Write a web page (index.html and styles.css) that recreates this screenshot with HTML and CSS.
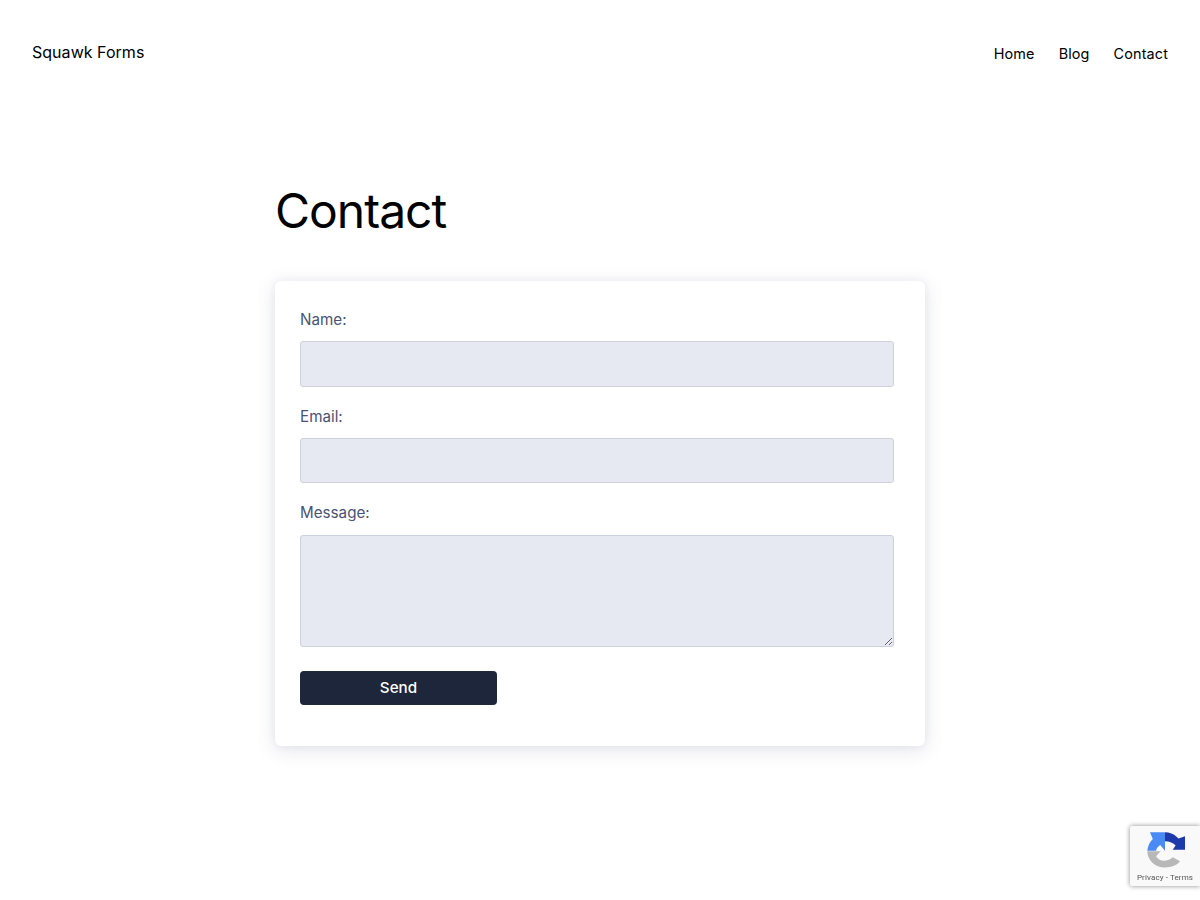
FILE: index.html
```html
<!DOCTYPE html>
<html lang="en">
<head>
<meta charset="utf-8">
<title>Contact - Squawk Forms</title>
<link rel="stylesheet" href="styles.css">
</head>
<body>
<header class="site-header">
  <a class="brand" href="#">Squawk Forms</a>
  <nav class="nav">
    <a href="#">Home</a>
    <a href="#">Blog</a>
    <a href="#">Contact</a>
  </nav>
</header>
<main class="content">
  <h1 class="title">Contact</h1>
  <form class="card">
    <label class="label" for="name">Name:</label>
    <input class="field" id="name" type="text">
    <label class="label" for="email">Email:</label>
    <input class="field" id="email" type="email">
    <label class="label" for="message">Message:</label>
    <textarea class="field area" id="message"></textarea>
    <button class="send" type="button">Send</button>
  </form>
</main>
<aside class="recaptcha">
  <svg class="rc-logo" viewBox="0 0 38 36" width="38" height="36" aria-hidden="true">
    <path fill="#1c3aa9" d="M18 .3C22.5 .3 26.5 2 29.6 4.8L31.5 6.5L38 4.3V17.7H25.7L28.6 13.6C26.5 11 22.5 9.3 18 9.3Z"/>
    <path fill="#4a8af4" d="M3 .3H18V18.7L13.2 13C11 14.4 9.4 16.4 9 18.7H.3C.8 14.4 2.6 10 5.8 7Z"/>
    <path fill="#b8b8b8" d="M.3 19.3H13.7L9 24.3C10.5 27 13.5 28.8 17 28.8C20.3 28.8 23.5 27.5 25.7 25.3L33 29.3C29.8 33.3 24.5 35.5 18 35.5C8 35.5 .3 28.3 .3 19.3Z"/>
  </svg>
  <div class="rc-links">Privacy - Terms</div>
</aside>
</body>
</html>
```

FILE: styles.css
```css
* { box-sizing: border-box; }
html, body { margin: 0; padding: 0; background: #fff; }
body { font-family: Inter, "Liberation Sans", sans-serif; color: #000; height: 900px; overflow: hidden; }
a { color: inherit; text-decoration: none; }

.site-header {
  display: flex;
  justify-content: space-between;
  align-items: flex-start;
  padding: 42px 32px 0;
}
.brand { font-size: 16px; line-height: 20px; letter-spacing: 0.03px; }
.nav { display: flex; gap: 24px; font-size: 14.4px; line-height: 20px; letter-spacing: 0.14px; padding-top: 2px; }

.content { width: 650px; margin: 0 auto; padding-top: 118px; }
.title { margin: 0; font-size: 48px; font-weight: 400; line-height: 58px; letter-spacing: -1px; }

.card {
  display: flex;
  flex-direction: column;
  align-items: flex-start;
  margin-top: 41px;
  height: 465px;
  padding: 25px 31px 40px 25px;
  background: #fff;
  border-radius: 6px;
  box-shadow: 0 4px 20px rgba(45, 55, 100, 0.13), 0 0 8px rgba(45, 55, 100, 0.06);
}
.label { font-size: 15.2px; line-height: 24.32px; color: #4a5372; padding-top: 1.8px; margin-bottom: 9.08px; }
.field {
  display: block;
  width: 100%;
  height: 45.4px;
  margin-bottom: 16.2px;
  background: #e6e9f2;
  border: 1px solid #cdd1dd;
  border-radius: 3px;
  outline: none;
}
.area { height: 112px; margin-bottom: 24px; resize: vertical; }
.send {
  width: 197px;
  height: 34px;
  border: 0;
  border-radius: 4px;
  background: #1e263c;
  color: #fff;
  font: 500 15.2px/20px Inter, "Liberation Sans", sans-serif;
}

.recaptcha {
  position: fixed;
  right: 0;
  top: 826px;
  width: 70px;
  height: 60px;
  padding-top: 6px;
  background: #f9f9f9;
  border-radius: 2px 0 0 2px;
  box-shadow: 0 0 5px rgba(128, 128, 128, 0.9);
  text-align: center;
}
.rc-logo { display: block; margin: 0 0 0 17px; }
.rc-links { font: 8px/10px Roboto, "Liberation Sans", sans-serif; letter-spacing: 0.12px; color: #555; margin-top: 5px; white-space: nowrap; }
```
